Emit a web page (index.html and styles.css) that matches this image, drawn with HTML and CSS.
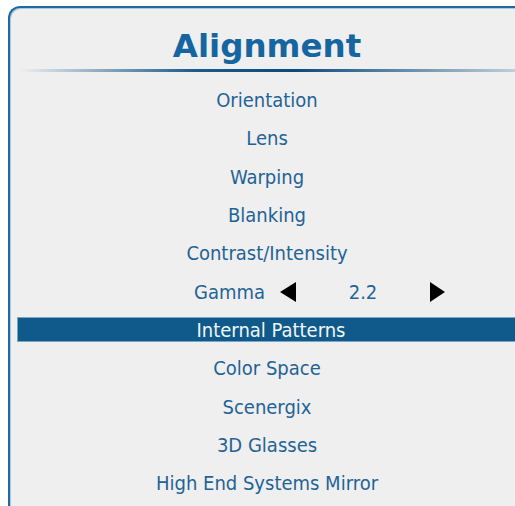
FILE: index.html
```html
<!DOCTYPE html>
<html>
<head>
<meta charset="utf-8">
<link rel="stylesheet" href="styles.css">
</head>
<body>
<div class="panel">
  <h1 class="title">Alignment</h1>
  <div class="rule"></div>
  <ul class="menu">
    <li class="item">Orientation</li>
    <li class="item">Lens</li>
    <li class="item">Warping</li>
    <li class="item">Blanking</li>
    <li class="item">Contrast/Intensity</li>
    <li class="item gamma">
      <span class="g-label">Gamma</span>
      <span class="arrow left"></span>
      <span class="g-value">2.2</span>
      <span class="arrow right"></span>
    </li>
    <li class="item selected">Internal Patterns</li>
    <li class="item">Color Space</li>
    <li class="item">Scenergix</li>
    <li class="item">3D Glasses</li>
    <li class="item">High End Systems Mirror</li>
  </ul>
</div>
</body>
</html>
```
FILE: styles.css
```css
html, body {
  margin: 0;
  padding: 0;
  background: #ffffff;
  overflow: hidden;
  width: 515px;
  height: 506px;
}
body {
  padding: 6px 0 0 8px;
  box-sizing: border-box;
}
.panel {
  width: 520px;
  height: 520px;
  box-sizing: border-box;
  background: #efefef;
  border-top: 2px solid #1f6aa0;
  border-left: 2px solid #1f6aa0;
  border-top-left-radius: 12px;
  box-shadow: inset 1px 1px 0 #a9c9e0;
  font-family: "DejaVu Sans Condensed", "DejaVu Sans", sans-serif;
  padding-top: 18px;
}
.title {
  margin: 0;
  text-align: center;
  font-family: "DejaVu Sans", sans-serif;
  font-weight: bold;
  font-size: 32.5px;
  line-height: 40px;
  color: #1565a0;
  padding-right: 4px;
}
.rule {
  height: 3px;
  margin: 3px 8px 0 10px;
  background: linear-gradient(to right, rgba(21,90,140,0) 0%, #1a5a8c 35%, #0b4a7c 55%, rgba(21,90,140,0.2) 100%);
}
.menu {
  list-style: none;
  margin: 0;
  padding: 9px 0 0 0;
}
.item {
  height: 38.3px;
  box-sizing: border-box;
  display: flex;
  align-items: center;
  justify-content: center;
  font-size: 20px;
  color: #1f6397;
  padding-right: 4px;
}
.gamma {
  justify-content: flex-start;
  padding-right: 0;
}
.g-label {
  width: 255px;
  text-align: right;
}
.arrow {
  width: 0;
  height: 0;
  border-top: 10px solid transparent;
  border-bottom: 10px solid transparent;
}
.arrow.left {
  border-right: 16px solid #000;
  margin-left: 15px;
}
.arrow.right {
  border-left: 15px solid #000;
}
.g-value {
  width: 134px;
  text-align: center;
}
.selected {
  height: 25px;
  margin: 6.65px 0 6.65px 7px;
  background: #0f5a8a;
  color: #f2f6fa;
  border: 1px solid #7aa6c6;
  border-right: none;
}
```
